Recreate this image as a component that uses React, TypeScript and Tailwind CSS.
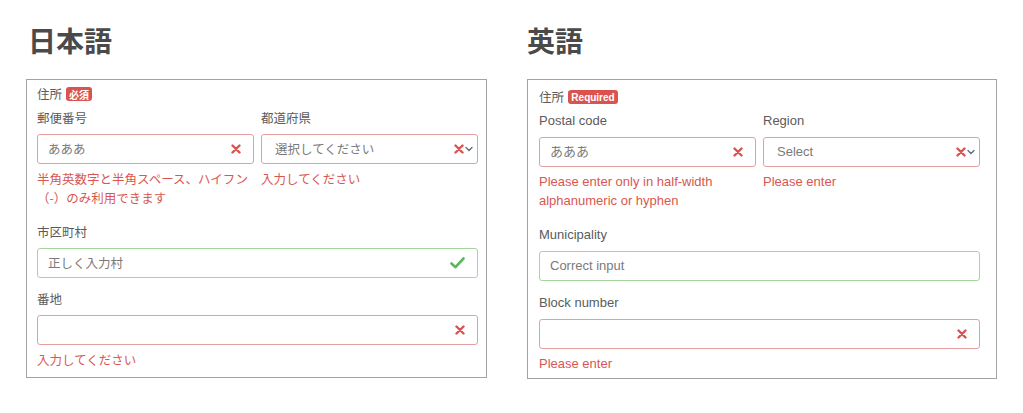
import React from "react";

type State = "error" | "ok" | "plain";

const XIcon = () => (
    <svg width="10" height="10" viewBox="0 0 10 10" className="shrink-0">
        <path d="M1.5 1.5 L8.5 8.5 M8.5 1.5 L1.5 8.5" stroke="#d9534f" strokeWidth="2.4" strokeLinecap="round"/>
    </svg>
);

const CheckIcon = () => (
    <svg width="15" height="12" viewBox="0 0 15 12" className="shrink-0">
        <path d="M1.5 6.5 L5.5 10.2 L13.5 1.5" stroke="#5cb85c" strokeWidth="2.6" fill="none" strokeLinecap="round" strokeLinejoin="round"/>
    </svg>
);

const Chevron = () => (
    <svg width="8" height="6" viewBox="0 0 8 6" className="shrink-0 ml-[1px]">
        <path d="M1 1.5 L4 4.5 L7 1.5" stroke="#5f6f7e" strokeWidth="1.4" fill="none" strokeLinecap="round"/>
    </svg>
);

// state "plain" = valid but no check mark (english sample)
const Input = ({value, state, select}: { value?: string; state: State; select?: boolean }) => (
    <div
        className={`flex h-[30px] items-center rounded-[3px] border bg-white ${state === "error" ? "border-[#e3a09e]" : "border-[#a8d59f]"} ${select ? "pl-[13px] pr-[4px]" : "pl-[10px] pr-[12px]"}`}>
        <span className="flex-1 text-[#7a7a7a]">{value}</span>
        {state === "error" && <XIcon/>}
        {state === "ok" && <CheckIcon/>}
        {select && <Chevron/>}
    </div>
);

const Panel = ({lang}: { lang: "ja" | "en" }) => {
    const ja = lang === "ja";
    const font = ja
        ? "font-['Noto_Sans_CJK_JP',sans-serif] text-[12.5px]"
        : "font-['Liberation_Sans','Noto_Sans_CJK_JP',sans-serif] text-[13px]";

    return (
        <div
            className={`border border-[#a3a3a3] bg-white ${font} ${ja ? "w-[461px] pt-[6px] pb-[8px] pl-[10px] pr-[8px]" : "w-[470px] pt-[9px] pb-[5px] pl-[11px] pr-[16px]"}`}>
            <div className="flex h-[16px] items-center gap-[4px]">
                <span className="font-['Noto_Sans_CJK_JP',sans-serif] text-[12.5px] text-[#5b5b5b]">住所</span>
                {ja ? (
                    <span
                        className="flex h-[14px] w-[26px] items-center justify-center rounded-[3px] bg-[#d9534f] font-['Noto_Sans_CJK_JP',sans-serif] text-[10px] font-bold text-white">必須</span>
                ) : (
                    <span
                        className="flex h-[14px] w-[50px] items-center justify-center rounded-[3px] bg-[#d9534f] font-['Liberation_Sans',sans-serif] text-[10px] font-bold text-white">Required</span>
                )}
            </div>

            <div className="mt-[7px] grid grid-cols-2 gap-x-[7px]">
                <div>
                    <div className="mb-[7px] leading-[18px] text-[#5b5b5b]">{ja ? "郵便番号" : "Postal code"}</div>
                    <Input value="あああ" state="error"/>
                    <div className="mt-[5px] leading-[19px] text-[#d9574f]">
                        {ja ? (
                            <>半角英数字と半角スペース、ハイフン<br/>（-）のみ利用できます</>
                        ) : (
                            <>Please enter only in half-width<br/>alphanumeric or hyphen</>
                        )}
                    </div>
                </div>
                <div>
                    <div className="mb-[7px] leading-[18px] text-[#5b5b5b]">{ja ? "都道府県" : "Region"}</div>
                    <Input value={ja ? "選択してください" : "Select"} state="error" select/>
                    <div className="mt-[5px] leading-[19px] text-[#d9574f]">{ja ? "入力してください" : "Please enter"}</div>
                </div>
            </div>

            <div className="mt-[16px]">
                <div className="mb-[7px] leading-[18px] text-[#5b5b5b]">{ja ? "市区町村" : "Municipality"}</div>
                <Input value={ja ? "正しく入力村" : "Correct input"} state={ja ? "ok" : "plain"}/>
            </div>

            <div className={ja ? "mt-[12px]" : "mt-[13px]"}>
                <div className="mb-[7px] leading-[18px] text-[#5b5b5b]">{ja ? "番地" : "Block number"}</div>
                <Input state="error"/>
                <div className="mt-[5px] leading-[19px] text-[#d9574f]">{ja ? "入力してください" : "Please enter"}</div>
            </div>
        </div>
    );
};

export default function App() {
    return (
        <div className="flex h-[413px] w-[1023px] gap-[40px] bg-white pl-[26px] pt-[23px]">
            <div>
                <h1 className="mb-[22px] h-[34px] pl-[2px] font-['Noto_Sans_CJK_JP',sans-serif] text-[28px] font-bold leading-[34px] text-[#4a4a4a]">日本語</h1>
                <Panel lang="ja"/>
            </div>
            <div>
                <h1 className="mb-[22px] h-[34px] font-['Noto_Sans_CJK_JP',sans-serif] text-[28px] font-bold leading-[34px] text-[#4a4a4a]">英語</h1>
                <Panel lang="en"/>
            </div>
        </div>
    );
}
